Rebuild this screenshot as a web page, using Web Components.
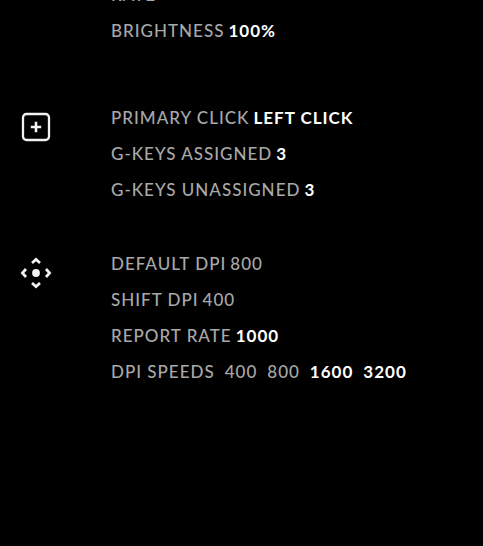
<!DOCTYPE html>
<html lang="en">
<head>
<meta charset="utf-8">
<title>Device settings</title>
<style>
html { background: #000; }
body { margin: 0; overflow: hidden; }
</style>
</head>
<body>
<device-summary>
  <settings-group>
    <setting-row label="RATE"></setting-row>
    <setting-row label="BRIGHTNESS"><setting-value active>100%</setting-value></setting-row>
  </settings-group>
  <settings-group>
    <device-icon slot="icon" name="assignments"></device-icon>
    <setting-row label="PRIMARY CLICK"><setting-value active>LEFT CLICK</setting-value></setting-row>
    <setting-row label="G-KEYS ASSIGNED"><setting-value active>3</setting-value></setting-row>
    <setting-row label="G-KEYS UNASSIGNED"><setting-value active>3</setting-value></setting-row>
  </settings-group>
  <settings-group>
    <device-icon slot="icon" name="sensitivity"></device-icon>
    <setting-row label="DEFAULT DPI"><setting-value>800</setting-value></setting-row>
    <setting-row label="SHIFT DPI"><setting-value>400</setting-value></setting-row>
    <setting-row label="REPORT RATE"><setting-value active>1000</setting-value></setting-row>
    <setting-row label="DPI SPEEDS" list><setting-value>400</setting-value><setting-value>800</setting-value><setting-value active>1600</setting-value><setting-value active>3200</setting-value></setting-row>
  </settings-group>
</device-summary>
<script>
class DeviceSummary extends HTMLElement {
  constructor() {
    super();
    this.attachShadow({ mode: 'open' }).innerHTML = `
      <style>
        :host { display: block; font: 500 17px/36px Lato, sans-serif; letter-spacing: 1px; color: #a8a8a8; }
        main { display: flex; flex-direction: column; gap: 38px; margin-top: -23px; }
        ::slotted(:first-child) { margin-bottom: 13px; }
      </style>
      <main><slot></slot></main>`;
  }
}
class SettingsGroup extends HTMLElement {
  constructor() {
    super();
    this.attachShadow({ mode: 'open' }).innerHTML = `
      <style>
        :host { display: grid; grid-template-columns: 72px minmax(0, 1fr); column-gap: 39px; }
        .icon { display: flex; justify-content: center; padding-top: 11px; }
      </style>
      <div class="icon"><slot name="icon"></slot></div>
      <div><slot></slot></div>`;
  }
}
class SettingRow extends HTMLElement {
  constructor() {
    super();
    this.attachShadow({ mode: 'open' }).innerHTML = `
      <style>
        :host { display: block; }
        div { display: flex; flex-wrap: wrap; column-gap: 4px; }
        :host([list]) div { column-gap: 10px; }
      </style>
      <div><span></span><slot></slot></div>`;
    this.shadowRoot.querySelector('span').textContent = this.getAttribute('label');
  }
}
class SettingValue extends HTMLElement {
  constructor() {
    super();
    this.attachShadow({ mode: 'open' }).innerHTML = `
      <style>
        :host { display: block; }
        :host([active]) { color: #fff; font-weight: 700; }
      </style>
      <slot></slot>`;
  }
}
class DeviceIcon extends HTMLElement {
  constructor() {
    super();
    const shapes = {
      assignments: '<rect x="3" y="3" width="26" height="26" rx="3.5" stroke-width="2.3"/><path d="M16 10.8v10.4M10.8 16h10.4" stroke-width="2.6"/>',
      sensitivity: '<circle cx="16" cy="16" r="3.9" fill="currentColor" stroke="none"/><path d="M12 6L16 2.4L20 6M12 26L16 29.6L20 26M6 12L2.4 16L6 20M26 12L29.6 16L26 20" stroke-width="2.7"/>'
    };
    this.attachShadow({ mode: 'open' }).innerHTML = `
      <style>
        :host { display: block; color: #f2f2f2; }
        svg { display: block; width: 32px; height: 32px; }
      </style>
      <svg viewBox="0 0 32 32" fill="none" stroke="currentColor" aria-hidden="true">${shapes[this.getAttribute('name')]}</svg>`;
  }
}
customElements.define('device-summary', DeviceSummary);
customElements.define('settings-group', SettingsGroup);
customElements.define('setting-row', SettingRow);
customElements.define('setting-value', SettingValue);
customElements.define('device-icon', DeviceIcon);
</script>
</body>
</html>
